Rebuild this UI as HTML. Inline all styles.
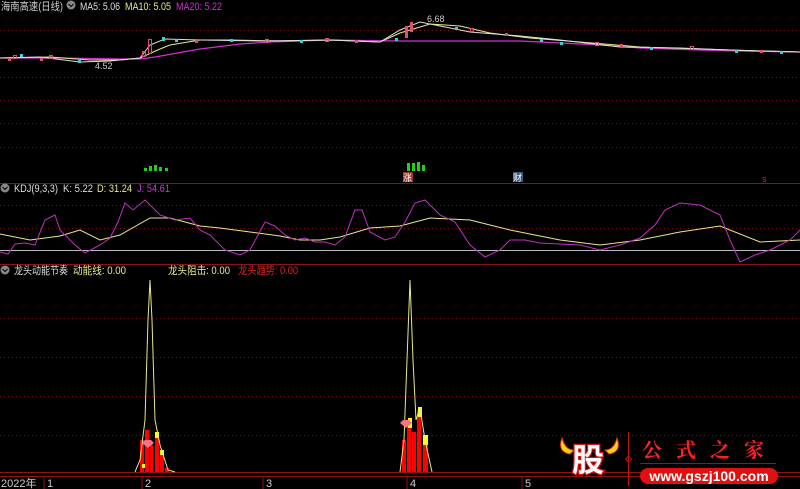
<!DOCTYPE html>
<html><head><meta charset="utf-8"><style>
html,body{margin:0;padding:0;background:#000;width:800px;height:489px;overflow:hidden}
svg{display:block;font-family:"Liberation Sans","Noto Sans CJK SC",sans-serif;font-size:10px}
.h{font-size:11px}
</style></head><body>
<svg width="800" height="489" viewBox="0 0 800 489">
<g stroke="#7a1414" stroke-dasharray="1,3" stroke-width="1">
<line x1="0" y1="30.5" x2="800" y2="30.5"/><line x1="0" y1="77.5" x2="800" y2="77.5"/>
<line x1="0" y1="100.5" x2="800" y2="100.5"/><line x1="0" y1="123.5" x2="800" y2="123.5"/>
<line x1="0" y1="147.5" x2="800" y2="147.5"/>
<line x1="0" y1="205.5" x2="800" y2="205.5"/><line x1="0" y1="228.5" x2="800" y2="228.5"/>
<line x1="0" y1="318.5" x2="800" y2="318.5"/><line x1="0" y1="357.5" x2="800" y2="357.5"/>
<line x1="0" y1="396.5" x2="800" y2="396.5"/><line x1="0" y1="435.5" x2="800" y2="435.5"/>
</g>
<line x1="0" y1="183.5" x2="800" y2="183.5" stroke="#8a1515"/>
<line x1="0" y1="264.5" x2="800" y2="264.5" stroke="#8a1515"/>
<line x1="0" y1="472.5" x2="800" y2="472.5" stroke="#8a1515"/>
<line x1="0" y1="476.5" x2="800" y2="476.5" stroke="#8a1515"/>
<line x1="0" y1="250.5" x2="800" y2="250.5" stroke="#bbb"/>
<!-- header texts -->
<text class="h" x="1" y="10" fill="#ccc" textLength="62" lengthAdjust="spacingAndGlyphs">海南高速(日线)</text>
<circle cx="71" cy="5" r="4.5" fill="#888"/><path d="M68.5 4l2.5 2.5 2.5-2.5" stroke="#000" fill="none"/>
<text class="h" x="80" y="10" fill="#ddd" textLength="40" lengthAdjust="spacingAndGlyphs">MA5: 5.06</text>
<text class="h" x="125" y="10" fill="#e8e88a" textLength="46" lengthAdjust="spacingAndGlyphs">MA10: 5.05</text>
<text class="h" x="176" y="10" fill="#d030d0" textLength="46" lengthAdjust="spacingAndGlyphs">MA20: 5.22</text>
<circle cx="5" cy="188" r="4.5" fill="#888"/><path d="M2.5 187l2.5 2.5 2.5-2.5" stroke="#000" fill="none"/>
<text class="h" x="14" y="192" fill="#ddd" textLength="44" lengthAdjust="spacingAndGlyphs">KDJ(9,3,3)</text>
<text class="h" x="63" y="192" fill="#ddd" textLength="30" lengthAdjust="spacingAndGlyphs">K: 5.22</text>
<text class="h" x="97" y="192" fill="#e8e88a" textLength="35" lengthAdjust="spacingAndGlyphs">D: 31.24</text>
<text class="h" x="137" y="192" fill="#d030d0" textLength="33" lengthAdjust="spacingAndGlyphs">J: 54.61</text>
<circle cx="5" cy="270" r="4.5" fill="#888"/><path d="M2.5 269l2.5 2.5 2.5-2.5" stroke="#000" fill="none"/>
<text class="h" x="14" y="274" fill="#ddd" textLength="54" lengthAdjust="spacingAndGlyphs">龙头动能节奏</text>
<text class="h" x="73" y="274" fill="#e8e88a" textLength="53" lengthAdjust="spacingAndGlyphs">动能线: 0.00</text>
<text class="h" x="168" y="274" fill="#e8e88a" textLength="62" lengthAdjust="spacingAndGlyphs">龙头阻击: 0.00</text>
<text class="h" x="238" y="274" fill="#e02020" textLength="60" lengthAdjust="spacingAndGlyphs">龙头趋势: 0.00</text>
<text class="h" x="1" y="487" fill="#ccc">2022年</text>
<g fill="#ccc" class="h"><text x="47" y="487">1</text><text x="145" y="487">2</text><text x="266" y="487">3</text><text x="410" y="487">4</text><text x="525" y="487">5</text></g>
<g stroke="#8a1515"><line x1="44" y1="477" x2="44" y2="489"/><line x1="142" y1="477" x2="142" y2="489"/><line x1="263" y1="477" x2="263" y2="489"/><line x1="407" y1="477" x2="407" y2="489"/><line x1="522" y1="477" x2="522" y2="489"/></g>
<!-- price lines -->
<polyline fill="none" stroke="#d030d0" stroke-width="1.2" points="0,58 60,58 120,59 140,59 155,57 200,49 240,44 270,42 330,40 400,41 470,41 520,41 560,43 600,45 640,48 700,50 740,51 800,52"/>
<polyline fill="none" stroke="#e8e88a" points="0,58 50,57 90,60 120,60 140,58 160,49 170,45 200,40 230,40 280,41 330,40 380,42 400,33 430,24 460,26 490,33 530,38 580,42 640,47 700,49 760,51 800,52"/>
<polyline fill="none" stroke="#ddd" points="0,58 40,57 80,62 110,61 140,58 150,45 165,39 200,40 260,41 330,40 380,42 400,30 420,22 440,26 470,32 520,36 560,40 620,47 680,48 730,50 800,52"/>
<g fill="none" stroke="#e0506a"><rect x="148.5" y="39.5" width="3" height="14"/><rect x="142.5" y="51.5" width="3" height="5"/><rect x="13.5" y="55.5" width="3" height="3"/><rect x="49.5" y="55.5" width="3" height="3"/><rect x="265.5" y="39.5" width="3" height="3"/><rect x="325.5" y="38.5" width="3" height="3"/><rect x="470.5" y="28.5" width="3" height="3"/><rect x="595.5" y="42.5" width="3" height="3"/><rect x="690.5" y="46.5" width="3" height="3"/></g>
<g fill="#e0506a"><rect x="405" y="26" width="3" height="12"/><rect x="410" y="22" width="3" height="10"/><rect x="8" y="58" width="3" height="3"/><rect x="40" y="58" width="3" height="3"/><rect x="195" y="40" width="3" height="3"/><rect x="355" y="40" width="3" height="3"/><rect x="505" y="33" width="3" height="3"/><rect x="620" y="44" width="3" height="3"/><rect x="760" y="50" width="3" height="3"/></g>
<g fill="#3cd0d0"><rect x="162" y="37" width="3" height="4"/><rect x="175" y="39" width="3" height="3"/><rect x="230" y="39" width="3" height="3"/><rect x="300" y="40" width="3" height="3"/><rect x="395" y="38" width="3" height="3"/><rect x="455" y="27" width="3" height="3"/><rect x="540" y="39" width="3" height="3"/><rect x="560" y="42" width="3" height="3"/><rect x="650" y="47" width="3" height="3"/><rect x="735" y="50" width="3" height="3"/><rect x="20" y="54" width="3" height="3"/><rect x="78" y="60" width="3" height="3"/><rect x="780" y="51" width="3" height="3"/></g>
<text x="95" y="69" fill="#ccc" font-size="9">4.52</text>
<text x="427" y="22" fill="#ccc" font-size="9">6.68</text>
<!-- green bars / markers -->
<g fill="#20d020"><rect x="144" y="168" width="3" height="3"/><rect x="149" y="166" width="3" height="5"/><rect x="154" y="165" width="3" height="6"/><rect x="159" y="167" width="3" height="4"/><rect x="165" y="168" width="3" height="3"/>
<rect x="407" y="163" width="3" height="8"/><rect x="412" y="163" width="3" height="8"/><rect x="417" y="162" width="3" height="9"/><rect x="422" y="165" width="3" height="6"/></g>
<rect x="403" y="172" width="10" height="10" fill="#a03030"/><text x="403" y="181" fill="#fff" font-size="9">涨</text>
<rect x="513" y="172" width="10" height="10" fill="#3a5a80"/><text x="513" y="181" fill="#fff" font-size="9">财</text>
<text x="762" y="182" fill="#e02020" font-size="9">s</text>
<!-- KDJ -->
<polyline fill="none" stroke="#e8e88a" points="0,234 30,240 60,236 80,230 100,240 120,235 150,218 170,218 200,226 220,228 250,232 280,236 300,240 320,240 340,237 370,228 400,226 430,218 470,220 510,230 560,240 600,245 640,240 680,232 720,226 760,242 800,240"/>
<polyline fill="none" stroke="#c030c0" points="0,252 8,254 15,244 25,243 35,245 45,220 55,215 60,230 75,245 85,253 100,245 110,238 118,222 125,203 133,210 145,200 160,215 175,220 190,218 200,230 210,235 225,250 240,255 250,250 258,235 265,222 275,226 285,235 295,240 305,238 315,242 325,242 335,245 345,237 355,210 362,210 370,232 385,240 395,237 405,222 415,203 425,200 440,215 455,222 470,245 485,257 500,250 510,240 525,240 540,243 560,244 580,245 600,250 620,245 640,238 655,225 665,210 680,203 700,205 720,215 730,240 740,262 755,255 770,250 790,240 800,230"/>
<!-- bottom panel -->
<g fill="#ff0000"><rect x="140" y="440" width="4" height="32"/><rect x="145" y="430" width="4" height="42"/><rect x="150" y="445" width="3" height="27"/><rect x="155" y="438" width="4" height="34"/><rect x="160" y="455" width="4" height="17"/><rect x="165" y="468" width="4" height="4"/>
<rect x="402" y="440" width="4" height="32"/><rect x="407" y="420" width="4" height="52"/><rect x="412" y="432" width="4" height="40"/><rect x="417" y="410" width="4" height="62"/><rect x="423" y="445" width="5" height="27"/></g>
<g fill="#ffff00"><rect x="142" y="464" width="3" height="4"/><rect x="155" y="432" width="4" height="6"/><rect x="160" y="450" width="4" height="5"/><rect x="418" y="407" width="4" height="10"/><rect x="423" y="435" width="5" height="10"/><rect x="408" y="418" width="4" height="10"/></g>
<polyline fill="none" stroke="#e8e88a" points="135,472 140,460 145,420 148,320 150,280 152,320 155,420 160,445 168,470 175,472"/>
<polyline fill="none" stroke="#e8e88a" points="400,472 404,440 407,360 410,280 413,360 416,420 420,408 425,440 432,472"/>
<path d="M145,440 l6,0 l3,3 l-6,5 l-6,-5z" fill="#ff6f8a"/>
<path d="M403,420 l6,0 l3,3 l-6,5 l-6,-5z" fill="#ff6f8a"/>
<!-- logo -->
<path d="M562,438 q-5,14 8,16 l4,-4 q-9,0 -12,-12z" fill="#ffd21a" stroke="#e03a10"/>
<path d="M617,438 q5,14 -8,16 l-4,-4 q9,0 12,-12z" fill="#ffd21a" stroke="#e03a10"/>
<text x="572" y="471" font-size="32" font-weight="bold" fill="#fff" stroke="#e01010" stroke-width="2.5" paint-order="stroke" font-family="'Noto Sans CJK SC',sans-serif">股</text>
<line x1="628.5" y1="432" x2="628.5" y2="486" stroke="#c01010"/>
<path d="M628.5,456 l3,3 -3,3 -3,-3z" fill="none" stroke="#c01010"/>
<text x="642" y="457" font-size="20" fill="#ff2020" font-family="'Noto Serif CJK SC',serif" font-weight="bold" letter-spacing="14">公式之家</text>
<line x1="640" y1="463.5" x2="776" y2="463.5" stroke="#a01010"/>
<rect x="640" y="468" width="138" height="16" rx="8" fill="#e01010"/>
<text x="709" y="481" text-anchor="middle" font-size="14" font-weight="bold" fill="#fff">www.gszj100.com</text>
</svg>
</body></html>
